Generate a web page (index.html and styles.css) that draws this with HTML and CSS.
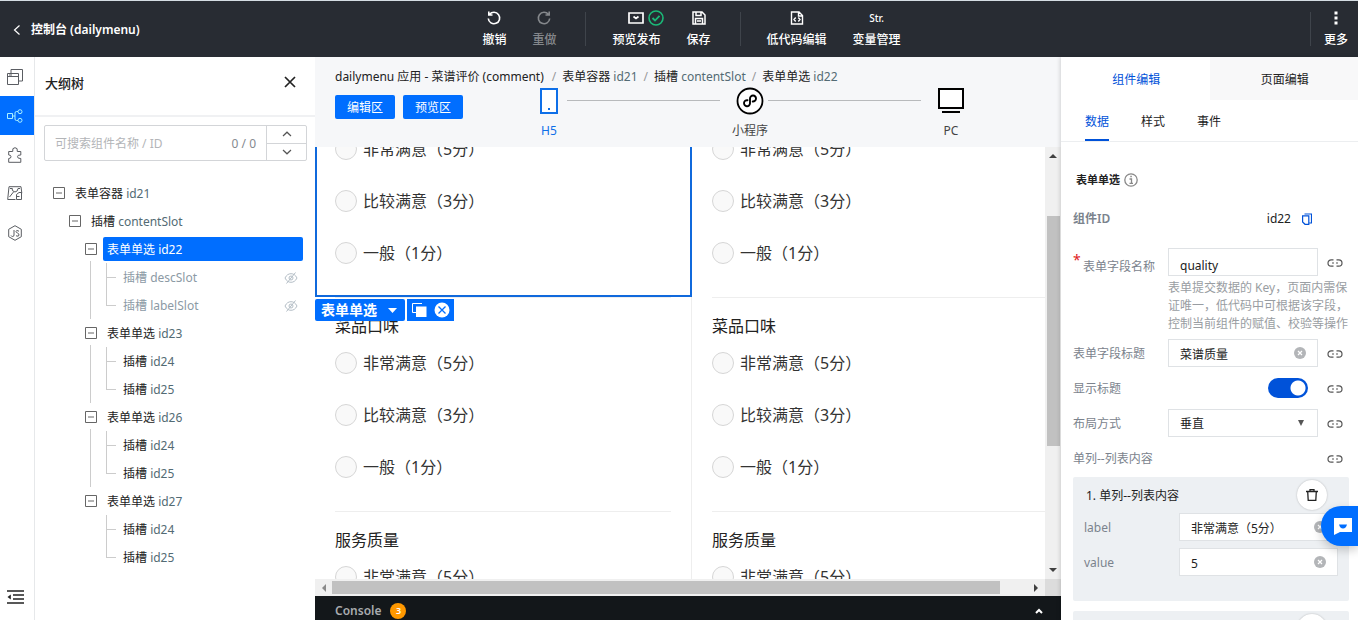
FILE: index.html
```html
<!DOCTYPE html>
<html lang="zh-CN">
<head>
<meta charset="utf-8">
<title>控制台 (dailymenu)</title>
<link rel="stylesheet" href="styles.css">
</head>
<body>
<svg class="defs" aria-hidden="true">
  <symbol id="link" viewBox="0 0 16 16"><path d="M6.500 4.800H4.200a3.200 3.200 0 0 0 0 6.400h2.300M9.500 4.800h2.300a3.200 3.200 0 0 1 0 6.400H9.500M5 8h2M9 8h2" fill="none" stroke="currentColor" stroke-width="1.200"/></symbol>
  <symbol id="clear" viewBox="0 0 12 12"><circle cx="6" cy="6" r="6" fill="#b3b5b8"/><path d="M4 4l4 4M8 4l-4 4" stroke="#fff" stroke-width="1.200"/></symbol>
  <symbol id="hidden-eye" viewBox="0 0 14 12"><path d="M1 6c1.500-3 3.500-4.300 6-4.300S11.500 3 13 6c-1.500 3-3.500 4.300-6 4.300S2.500 9 1 6zM11.500.5l-9 11" fill="none" stroke="currentColor"/><circle cx="7" cy="6" r="2" fill="none" stroke="currentColor"/></symbol>
  <symbol id="minus-box" viewBox="0 0 12 12"><path d="M.5.5h11v11H.5zM3 6h6" fill="none" stroke="currentColor"/></symbol>
</svg>

<header class="topbar">
  <a class="brand" href="#"><svg width="8" height="12" viewBox="0 0 8 12"><path d="M6.500 1.500L1.500 6l5 4.500" fill="none" stroke="currentColor" stroke-width="1.200"/></svg>控制台 (dailymenu)</a>
  <nav class="tools">
    <button class="tool"><span class="tool-icon"><svg width="16" height="16" viewBox="0 0 16 16"><path d="M3.500 4.500A5.700 5.700 0 1 1 2.300 8.500M2.800 1.500v3.500h3.700" fill="none" stroke="currentColor" stroke-width="1.600"/></svg></span>撤销</button>
    <button class="tool" disabled><span class="tool-icon"><svg width="16" height="16" viewBox="0 0 16 16"><path d="M12.500 4.500A5.700 5.700 0 1 0 13.700 8.500M13.200 1.500v3.500H9.500" fill="none" stroke="currentColor" stroke-width="1.600"/></svg></span>重做</button>
    <span class="tool-sep"></span>
    <button class="tool"><span class="tool-icon"><svg width="16" height="12" viewBox="0 0 16 12"><path d="M1 1h14v10H1z M5.500 4.500l2.500 2 2.500-2" fill="none" stroke="currentColor" stroke-width="1.700"/></svg><svg class="tool-status" width="16" height="16" viewBox="0 0 16 16"><circle cx="8" cy="8" r="7" fill="none" stroke="#1bb978" stroke-width="1.600"/><path d="M4.500 8l2.500 2.500L11.500 5.800" fill="none" stroke="#1bb978" stroke-width="1.800"/></svg></span>预览发布</button>
    <button class="tool"><span class="tool-icon"><svg width="14" height="14" viewBox="0 0 14 14"><path d="M1 1h9l3 3v9H1zM4 1v3.500h5V1M3.500 13V7.500h7V13M5 10h4" fill="none" stroke="currentColor" stroke-width="1.500"/></svg></span>保存</button>
    <span class="tool-sep"></span>
    <button class="tool"><span class="tool-icon"><svg width="14" height="14" viewBox="0 0 14 14"><path d="M1.500 1h7.500l3.500 3.500V13h-11zM8.500 1v4h4M5.700 6.500L4 8.500l1.700 2M8.300 6.500l1.700 2-1.700 2" fill="none" stroke="currentColor" stroke-width="1.400"/></svg></span>低代码编辑</button>
    <button class="tool"><span class="tool-icon tool-str">Str.</span>变量管理</button>
  </nav>
  <div class="more">
    <span class="tool-sep"></span>
    <button class="tool"><span class="tool-icon"><svg width="4" height="14" viewBox="0 0 4 14"><path d="M.5.5h3v3h-3zM.5 5.500h3v3h-3zM.5 10.500h3v3h-3z" fill="currentColor"/></svg></span>更多</button>
  </div>
</header>

<div class="workspace">
  <nav class="rail">
    <button aria-label="页面"><svg width="16" height="16" viewBox="0 0 16 16"><path d="M.5 4.500h11v11H.5zM.5 7.500h11M4 4V.5h11.500v11.500H12M2 6h3" fill="none" stroke="currentColor"/></svg></button>
    <button class="current" aria-label="大纲树"><svg width="16" height="14" viewBox="0 0 16 14"><path d="M.5 4.500h5v5h-5zM5.500 7H8M11 2.500H9.500q-1.500 0-1.500 1.500v6q0 1.500 1.500 1.500H11" fill="none" stroke="currentColor"/><circle cx="13" cy="2.700" r="2" fill="none" stroke="currentColor"/><circle cx="13" cy="11.300" r="2" fill="none" stroke="currentColor"/></svg></button>
    <button aria-label="组件"><svg width="14" height="16" viewBox="0 0 14 16"><path d="M.7 15.300V11.500q2.300 0 2.300-1.800T.7 8V4.500h4Q4 .7 7 .7t2.300 3.800h3.500V8q-3.300-.3-3.300 1.700t3.300 1.800v3.800z" fill="none" stroke="currentColor"/></svg></button>
    <button aria-label="模板"><svg width="16" height="15" viewBox="0 0 16 15"><path d="M8.500 13.500H.7L2 .7h12l.8 6.500M3 2.500h2.500M5 2.500q0 3 3 3.500 3-.5 3-3.500h2M2.500 11l4-5M9.500 8.500l2.500-2h2.500v7h-5zM9.500 10.500h3" fill="none" stroke="currentColor"/></svg></button>
    <button aria-label="脚本"><svg width="14" height="16" viewBox="0 0 14 16"><path d="M7 .7l6.300 3.600v7.400L7 15.300.7 11.700V4.300zM6 5v5q0 1.500-1.300 1.500T3 10.500M11 6.200Q8 4.500 8 6.500q0 1 1.500 1.500T11 10q0 2-3 .8" fill="none" stroke="currentColor"/></svg></button>
    <button class="collapse" aria-label="收起"><svg width="17" height="14" viewBox="0 0 17 14"><path d="M0 1h17M6 5h11M6 9h11M0 13h17" stroke="currentColor" stroke-width="1.500"/><path d="M3.800 4.500v5L.5 7z" fill="currentColor"/></svg></button>
  </nav>

  <aside class="outline">
    <div class="outline-head"><h2>大纲树</h2><button aria-label="关闭"><svg width="12" height="12" viewBox="0 0 12 12"><path d="M1 1l10 10M11 1L1 11" stroke="currentColor" stroke-width="1.700"/></svg></button></div>
    <div class="search">
      <input type="text" placeholder="可搜索组件名称 / ID" aria-label="搜索组件">
      <span class="count">0 / 0</span>
      <div class="stepper">
        <button aria-label="上一个"><svg width="10" height="6" viewBox="0 0 10 6"><path d="M1 5l4-3.800L9 5" fill="none" stroke="currentColor" stroke-width="1.200"/></svg></button>
        <button aria-label="下一个"><svg width="10" height="6" viewBox="0 0 10 6"><path d="M1 1l4 3.800L9 1" fill="none" stroke="currentColor" stroke-width="1.200"/></svg></button>
      </div>
    </div>
    <ul class="tree">
      <li><div class="node"><svg><use href="#minus-box"/></svg><span>表单容器 <em>id21</em></span></div>
        <ul>
          <li><div class="node"><svg><use href="#minus-box"/></svg><span>插槽 <em>contentSlot</em></span></div>
            <ul class="items">
              <li><div class="node selected"><svg><use href="#minus-box"/></svg><span>表单单选 <em>id22</em></span></div>
                <ul class="leaves muted">
                  <li><div class="node"><span>插槽 <em>descSlot</em></span><svg class="eye"><use href="#hidden-eye"/></svg></div></li>
                  <li><div class="node"><span>插槽 <em>labelSlot</em></span><svg class="eye"><use href="#hidden-eye"/></svg></div></li>
                </ul></li>
              <li><div class="node"><svg><use href="#minus-box"/></svg><span>表单单选 <em>id23</em></span></div>
                <ul class="leaves">
                  <li><div class="node"><span>插槽 <em>id24</em></span></div></li>
                  <li><div class="node"><span>插槽 <em>id25</em></span></div></li>
                </ul></li>
              <li><div class="node"><svg><use href="#minus-box"/></svg><span>表单单选 <em>id26</em></span></div>
                <ul class="leaves">
                  <li><div class="node"><span>插槽 <em>id24</em></span></div></li>
                  <li><div class="node"><span>插槽 <em>id25</em></span></div></li>
                </ul></li>
              <li><div class="node"><svg><use href="#minus-box"/></svg><span>表单单选 <em>id27</em></span></div>
                <ul class="leaves">
                  <li><div class="node"><span>插槽 <em>id24</em></span></div></li>
                  <li><div class="node"><span>插槽 <em>id25</em></span></div></li>
                </ul></li>
            </ul></li>
        </ul></li>
    </ul>
  </aside>

  <main class="stage">
    <div class="stage-head">
      <div class="crumbs">
        <span class="crumb-app">dailymenu 应用 - 菜谱评价 (comment)</span><i>/</i><span>表单容器 <em>id21</em></span><i>/</i><span>插槽 <em>contentSlot</em></span><i>/</i><span>表单单选 <em>id22</em></span>
      </div>
      <div class="modes">
        <button class="mode">编辑区</button><button class="mode">预览区</button>
        <div class="devices">
          <div class="device h5"><span class="device-icon"><svg width="18" height="26" viewBox="0 0 18 26"><path d="M1 1h16v24H1z" fill="#fff" stroke="currentColor" stroke-width="2"/><path d="M8 20h2v2H8z" fill="currentColor"/></svg></span>H5</div>
          <hr>
          <div class="device mini"><span class="device-icon"><svg width="28" height="28" viewBox="0 0 28 28"><circle cx="14" cy="14" r="12.500" fill="#fff" stroke="#000" stroke-width="1.800"/><path d="M11.500 13.300a3 3 0 1 0 2.500 3V11.500a3 3 0 1 1 2.700 3" fill="none" stroke="#000" stroke-width="1.900" stroke-linecap="round"/></svg></span>小程序</div>
          <hr>
          <div class="device pc"><span class="device-icon"><svg width="26" height="26" viewBox="0 0 26 26"><path d="M1 1h24v19H1z" fill="#fff" stroke="#000" stroke-width="2"/><path d="M4 24h18" stroke="#000" stroke-width="2"/></svg></span>PC</div>
        </div>
      </div>
    </div>

    <div class="canvas">
      <div class="view">
        <div class="frame">
          <section class="group first active">
            <label><input type="radio" name="a1">非常满意（5分）</label>
            <label><input type="radio" name="a1">比较满意（3分）</label>
            <label><input type="radio" name="a1">一般（1分）</label>
            <div class="badge">
              <button class="badge-name">表单单选<svg width="9" height="5" viewBox="0 0 9 5"><path d="M0 0h9L4.500 5z" fill="#fff"/></svg></button>
              <div class="badge-actions">
                <button aria-label="复制"><svg width="15" height="14" viewBox="0 0 15 14"><path d="M10 .5H.5v9H4" fill="none" stroke="#fff"/><path d="M4 3.500h10.500V14H4z" fill="#fff"/></svg></button>
                <button aria-label="删除"><svg width="16" height="16" viewBox="0 0 16 16"><circle cx="8" cy="8" r="7.500" fill="#fff"/><path d="M4.500 4.500l7 7M11.500 4.500l-7 7" stroke="#006eff" stroke-width="1.300"/></svg></button>
              </div>
            </div>
          </section>
          <section class="group">
            <h3>菜品口味</h3>
            <label><input type="radio" name="a2">非常满意（5分）</label>
            <label><input type="radio" name="a2">比较满意（3分）</label>
            <label><input type="radio" name="a2">一般（1分）</label>
          </section>
          <section class="group">
            <h3>服务质量</h3>
            <label><input type="radio" name="a3">非常满意（5分）</label>
          </section>
        </div>
        <div class="frame">
          <section class="group first">
            <label><input type="radio" name="b1">非常满意（5分）</label>
            <label><input type="radio" name="b1">比较满意（3分）</label>
            <label><input type="radio" name="b1">一般（1分）</label>
          </section>
          <section class="group">
            <h3>菜品口味</h3>
            <label><input type="radio" name="b2">非常满意（5分）</label>
            <label><input type="radio" name="b2">比较满意（3分）</label>
            <label><input type="radio" name="b2">一般（1分）</label>
          </section>
          <section class="group">
            <h3>服务质量</h3>
            <label><input type="radio" name="b3">非常满意（5分）</label>
          </section>
        </div>
      </div>
      <div class="vbar"><svg width="8" height="4" viewBox="0 0 8 4"><path d="M4 0l4 4H0z" fill="#404040"/></svg><div class="vtrack"><div class="vthumb"></div></div><svg width="8" height="4" viewBox="0 0 8 4"><path d="M0 0h8L4 4z" fill="#404040"/></svg></div>
      <div class="hbar"><svg width="4" height="8" viewBox="0 0 4 8"><path d="M4 0v8L0 4z" fill="#8a8a8a"/></svg><div class="htrack"><div class="hthumb"></div></div><svg width="4" height="8" viewBox="0 0 4 8"><path d="M0 0l4 4-4 4z" fill="#404040"/></svg></div>
      <div class="corner"></div>
    </div>
    <footer class="console">Console<span class="console-count">3</span><button aria-label="展开"><svg width="8" height="6" viewBox="0 0 8 6"><path d="M1 5l3-3 3 3" fill="none" stroke="#fff" stroke-width="2"/></svg></button></footer>
  </main>

  <aside class="props">
    <div class="tabs"><button class="on">组件编辑</button><button>页面编辑</button></div>
    <div class="subtabs"><button class="on">数据</button><button>样式</button><button>事件</button></div>
    <div class="form">
      <h4>表单单选<svg width="14" height="14" viewBox="0 0 14 14"><circle cx="7" cy="7" r="6.200" fill="none" stroke="#888" stroke-width="1.300"/><path d="M5.500 6h2v4M5.500 10.300h3.500M6.300 3.500h1.500" fill="none" stroke="#888" stroke-width="1.300"/></svg></h4>
      <div class="idrow"><b>组件ID</b><span>id22</span><button aria-label="复制ID"><svg width="10" height="12" viewBox="0 0 10 12"><path d="M2.500 1h7v9h-2M.6 2.800h6.200v8.500H3L.6 9z" fill="none" stroke="#0052d9" stroke-width="1.200"/></svg></button></div>
      <div class="row named">
        <label class="required" for="fname">表单字段名称</label>
        <div class="field"><input id="fname" type="text" value="quality"></div>
        <button class="bind" aria-label="绑定"><svg><use href="#link"/></svg></button>
        <p class="hint">表单提交数据的 Key，页面内需保<br>证唯一，低代码中可根据该字段，<br>控制当前组件的赋值、校验等操作</p>
      </div>
      <div class="row">
        <label for="ftitle">表单字段标题</label>
        <div class="field"><input id="ftitle" type="text" value="菜谱质量"><button class="clear" aria-label="清除"><svg><use href="#clear"/></svg></button></div>
        <button class="bind" aria-label="绑定"><svg><use href="#link"/></svg></button>
      </div>
      <div class="row">
        <label for="fshow">显示标题</label>
        <input id="fshow" class="switch" type="checkbox" checked>
        <button class="bind" aria-label="绑定"><svg><use href="#link"/></svg></button>
      </div>
      <div class="row">
        <label for="flayout">布局方式</label>
        <div class="field"><select id="flayout"><option>垂直</option><option>水平</option></select><svg class="caret" viewBox="0 0 6 6"><path d="M0 0h6L3 6z" fill="#555"/></svg></div>
        <button class="bind" aria-label="绑定"><svg><use href="#link"/></svg></button>
      </div>
      <div class="row">
        <span class="wide">单列--列表内容</span>
        <button class="bind" aria-label="绑定"><svg><use href="#link"/></svg></button>
      </div>
      <div class="card">
        <div class="card-head"><span>1. 单列--列表内容</span><button class="trash" aria-label="删除"><svg width="12" height="12" viewBox="0 0 12 12"><path d="M0 2.500h12M4 2V.7h4V2M1.700 2.500l.5 8.800h7.600l.5-8.800" fill="none" stroke="#222" stroke-width="1.300"/></svg></button></div>
        <div class="card-row"><label for="ilabel">label</label><div class="field"><input id="ilabel" type="text" value="非常满意（5分）"><button class="clear" aria-label="清除"><svg><use href="#clear"/></svg></button></div></div>
        <div class="card-row"><label for="ivalue">value</label><div class="field"><input id="ivalue" type="text" value="5"><button class="clear" aria-label="清除"><svg><use href="#clear"/></svg></button></div></div>
      </div>
      <div class="card"><div class="card-head"><button class="trash" aria-label="删除"></button></div></div>
    </div>
  </aside>
</div>
<button class="chat" aria-label="在线客服"><svg width="18" height="17" viewBox="0 0 18 17"><path d="M0 0h18v14H6l-6 3z" fill="#fff"/><path d="M5 6.500h8q-1 4-4 4t-4-4z" fill="#006eff"/></svg></button>
</body>
</html>
```
FILE: styles.css
```css
* { box-sizing: border-box; }
body {
  margin: 0;
  height: 100vh;
  display: flex;
  flex-direction: column;
  overflow: hidden;
  font: 12px/18px "Noto Sans", "Noto Sans CJK SC", sans-serif;
  color: #222;
  background: #fff;
}
button, input, select { font: inherit; color: inherit; }
button { border: 0; padding: 0; background: none; cursor: pointer; }
ul { list-style: none; margin: 0; padding: 0; }
h2, h3, h4, p { margin: 0; }
em { font-style: normal; color: #536b74; }
svg { flex: none; }
.defs { position: absolute; width: 0; height: 0; }

/* top bar */
.topbar {
  flex: none;
  height: 57px;
  display: flex;
  background: #282c33;
  border-top: 1px solid #d5dde3;
  color: #fff;
}
.brand {
  flex: 1;
  display: flex;
  align-items: center;
  gap: 10px;
  padding: 2px 0 0 13px;
  color: #fff;
  font-weight: 600;
  text-decoration: none;
}
.tools { display: flex; gap: 26px; padding-left: 22px; }
.tool {
  display: flex;
  flex-direction: column;
  align-items: center;
  padding-top: 8px;
  gap: 4px;
  font-weight: 500;
  white-space: nowrap;
}
.tool:disabled { color: #85888c; }
.tool-icon { position: relative; height: 18px; display: flex; align-items: center; }
.tool-status { position: absolute; left: 100%; margin-left: 4px; }
.tool-str { font-size: 10px; }
.tool-sep { width: 1px; height: 34px; margin: 11px 0 0 3px; background: #3f444b; }
.more { flex: 1; display: flex; justify-content: flex-end; gap: 13px; padding-right: 10px; }

.workspace { flex: 1; min-height: 0; display: flex; }

/* icon rail */
.rail {
  flex: none;
  width: 35px;
  display: flex;
  flex-direction: column;
  border-right: 1px solid #e6e8ea;
  color: #5a5d62;
}
.rail button { height: 39px; padding-right: 5px; display: flex; align-items: center; justify-content: center; }
.rail .current { background: #006eff; color: #a9f0ff; }
.rail .collapse { margin-top: auto; margin-bottom: 4px; padding-right: 4px; color: #222; }

/* outline */
.outline { flex: none; width: 280px; }
.outline-head {
  height: 60px;
  padding: 0 19px 8px 10px;
  display: flex;
  align-items: center;
  justify-content: space-between;
  border-bottom: 2px solid #f0f1f3;
}
.outline-head h2 { padding-top: 2px; font-size: 13px; font-weight: 500; }
.outline-head button { display: flex; }
.search {
  height: 36px;
  margin: 8px 8px 18px 9px;
  display: flex;
  border: 1px solid #d3d5d8;
  border-radius: 2px;
}
.search input { flex: 1; min-width: 0; border: 0; outline: 0; padding: 2px 0 0 10px; background: none; }
.search input::placeholder { color: #b3b5b8; }
.count { align-self: center; padding: 2px 10px 0 0; color: #858a90; }
.stepper { width: 40px; display: flex; flex-direction: column; border-left: 1px solid #d3d5d8; color: #555; }
.stepper button { flex: 1; display: flex; align-items: center; justify-content: center; }
.stepper button + button { border-top: 1px solid #d3d5d8; }

.tree { padding: 0 12px 0 18px; }
.tree ul { padding-left: 16px; }
.tree li { position: relative; }
.node { height: 28px; display: flex; align-items: center; gap: 6px; color: #666; }
.node > svg { width: 12px; height: 12px; }
.node > span { flex: 1; padding: 4px 4px 2px; border-radius: 2px; color: #222; }
.node.selected > span { background: #006eff; color: #fff; }
.node.selected em { color: #fff; }
.leaves .node { padding-left: 18px; }
.muted .node > span, .muted em { color: #8c9aa5; }
.node > .eye { width: 14px; height: 12px; margin: 2px 5px 0 0; color: #b4bec6; }
.items > li:not(:last-child)::before,
.leaves > li::before {
  content: "";
  position: absolute;
  left: 5px;
  top: 26px;
  bottom: 0;
  border-left: 1px solid #ccc;
}
.leaves > li::before { top: 0; }
.leaves > li:last-child::before { bottom: 14px; }
.leaves > li::after { content: ""; position: absolute; left: 5px; top: 14px; width: 10px; border-top: 1px solid #ccc; }

/* stage */
.stage { flex: 1; min-width: 0; display: flex; flex-direction: column; }
.stage-head { flex: none; height: 90px; padding: 10px 97px 0 20px; background: #f6f7f9; }
.crumbs { height: 20px; line-height: 20px; white-space: nowrap; }
.crumbs i { margin: 0 6px; font-style: normal; color: #999; }
.crumb-app { margin-right: 2px; }
.modes { display: flex; gap: 8px; align-items: flex-start; }
.mode { width: 60px; height: 24px; margin-top: 8px; padding-top: 2px; border-radius: 2px; background: #006eff; color: #fff; }
.devices { flex: 1; margin-left: 69px; display: flex; align-items: flex-start; }
.devices hr { flex: 1; margin: 13px 0 0; border: 0; border-top: 1px solid #b8babc; }
.device { display: flex; flex-direction: column; align-items: center; gap: 7px; white-space: nowrap; color: #444; }
.device-icon { height: 28px; display: flex; align-items: center; }
.h5 { margin-right: 9px; color: #0e6fe8; }
.mini { margin-left: 12px; }
.pc { margin-left: 17px; }

.canvas {
  flex: 1;
  min-height: 0;
  display: grid;
  grid-template: minmax(0, 1fr) 17px / minmax(0, 1fr) 16px;
}
.view { display: flex; overflow: hidden; background: #fff; }
.frame { flex: 0 0 377px; border-right: 1px solid #eee; }
.group { position: relative; padding: 0 20px 18px; font-size: 16px; color: #333; }
.group.first { margin-top: -24px; }
.group.active::after { content: ""; position: absolute; inset: 0 -1px 0 0; border: 2px solid #1069dc; pointer-events: none; }
.group h3 {
  height: 40px;
  padding-top: 16px;
  line-height: 24px;
  border-top: 1px solid #eee;
  font-size: 16px;
  font-weight: 400;
  color: #222;
}
.group label { height: 52px; display: flex; align-items: center; gap: 6px; }
.group input {
  appearance: none;
  width: 22px;
  height: 22px;
  margin: 0;
  border: 1px solid #d6d6d6;
  border-radius: 50%;
  background: #f9f9f9;
}
.badge { position: absolute; z-index: 1; left: 0; top: 100%; margin-top: 2px; display: flex; gap: 2px; }
.badge button { display: flex; align-items: center; color: #fff; }
.badge .badge-name { height: 22px; padding: 0 8px 0 6px; gap: 11px; border-radius: 2px; background: #006eff; font-size: 14px; font-weight: 600; white-space: nowrap; }
.badge-actions { height: 22px; padding: 0 4px 0 5px; display: flex; gap: 7px; background: #006eff; }

.vbar, .hbar { display: flex; align-items: center; background: #f0f0f0; }
.vbar { flex-direction: column; padding: 7px 0; }
.hbar { padding: 0 7px; }
.vtrack { flex: 1; width: 13px; margin: 6px 0; padding-top: 52px; }
.vthumb { height: 230px; background: #c1c1c1; }
.htrack { flex: 1; height: 13px; margin: 0 6px; }
.hthumb { width: 96%; height: 100%; background: #c1c1c1; }
.corner { background: #dcdcdc; }
.console {
  flex: none;
  height: 24px;
  padding: 6px 18px 0 20px;
  display: flex;
  align-items: center;
  background: #13171a;
  color: #a9abae;
  font-weight: 600;
}
.console-count { width: 16px; height: 16px; margin-left: 9px; border-radius: 50%; background: #ff9800; color: #fff; font-size: 9px; line-height: 16px; text-align: center; }
.console button { margin-left: auto; display: flex; }

/* properties */
.props { flex: none; width: 297px; overflow: hidden; box-shadow: -1px 0 4px rgba(0, 0, 0, .15); background: #fff; position: relative; }
.tabs { height: 43px; display: flex; }
.tabs button { flex: 1; padding: 2px 0 0 2px; background: #f8f8f9; }
.tabs .on { background: #fff; color: #0052d9; }
.subtabs { height: 42px; padding-left: 24px; display: flex; gap: 32px; border-bottom: 1px solid #eceef0; }
.subtabs button { padding-top: 2px; }
.subtabs .on { color: #0052d9; border-bottom: 2px solid #0052d9; padding-top: 4px; }
.form { padding: 28px 9px 0 12px; }
.form h4 { height: 20px; padding-left: 3px; display: flex; align-items: center; gap: 4px; font-size: 11px; font-weight: 600; }
.idrow { display: flex; align-items: center; gap: 11px; margin: 20px 37px 20px 0; height: 18px; }
.idrow b { flex: 1; font-weight: 600; color: #7b838d; }
.idrow button { display: flex; }
.row { display: grid; grid-template-columns: 95px minmax(0, 1fr) 31px; align-items: center; min-height: 28px; margin-bottom: 7px; color: #7b838d; }
.row label, .wide, .card label, .card-head span { padding-top: 2px; }
.named { margin-bottom: 6px; }
.row .required { position: relative; padding: 9px 0 0 10px; }
.required::before { content: "*"; position: absolute; left: 0; top: 2px; color: #e02020; font-size: 14px; }
.hint { grid-column: 2 / 4; padding-top: 3px; color: #999da2; white-space: nowrap; }
.field { position: relative; height: 28px; }
.field input, .field select { width: 100%; height: 28px; padding: 2px 26px 0 11px; border: 1px solid #dfe2e5; border-radius: 0; outline: 0; appearance: none; background: #fff; color: #222; }
.field #fname { padding-top: 6px; }
.clear { position: absolute; right: 12px; top: 8px; display: flex; }
.clear svg { width: 12px; height: 12px; }
.caret { position: absolute; right: 14px; top: 11px; width: 6px; height: 6px; pointer-events: none; }
.bind { display: flex; padding: 2px 0 0 9px; color: #555; }
.bind svg { width: 16px; height: 16px; }
.switch { appearance: none; justify-self: end; width: 40px; height: 20px; margin: 0 10px 0 0; border-radius: 10px; background: radial-gradient(circle at 30px 10px, #fff 7px, #0052d9 8px); }
.wide { grid-column: 1 / 3; }
.card { height: 124px; margin-bottom: 10px; padding: 3px 11px 0; border-radius: 2px; background: #edf0f3; }
.row + .card { margin-top: -2px; }
.card-head { display: flex; height: 30px; margin-bottom: 3px; padding: 0 11px 0 2px; align-items: center; justify-content: space-between; }
.trash { width: 30px; height: 30px; margin-left: auto; border-radius: 50%; background: #fff; box-shadow: 0 0 2px rgba(0, 0, 0, .25); display: flex; align-items: center; justify-content: center; }
.card-row { display: grid; grid-template-columns: 95px minmax(0, 1fr); align-items: center; margin-bottom: 7px; color: #7b838d; }
.chat { position: fixed; right: 0; bottom: 74px; width: 37px; height: 40px; padding-left: 13px; border-radius: 20px 0 0 20px; background: #006eff; box-shadow: 0 4px 10px rgba(0, 0, 0, .2); display: flex; align-items: center; }
```
